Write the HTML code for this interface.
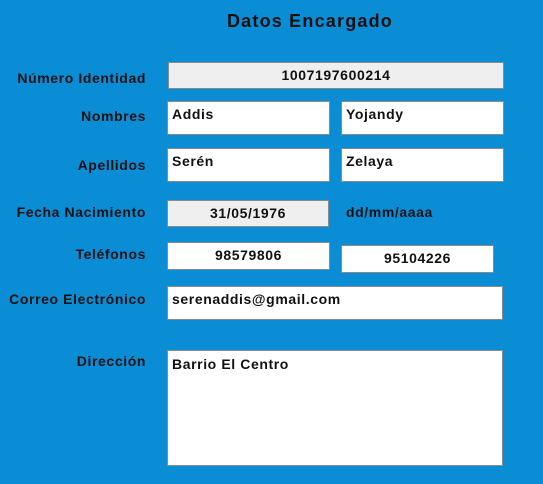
<!DOCTYPE html>
<html><head><style>
body{margin:0;width:543px;height:484px;background:#0b8dd6;position:relative;overflow:hidden;font-family:"Liberation Sans",sans-serif;font-weight:bold;color:#111}
.l{position:absolute;right:397px;font-size:14px;letter-spacing:0.6px;white-space:nowrap}
.b{position:absolute;box-sizing:border-box;border:1px solid #8a8a8a;background:#fff;font-size:14px;letter-spacing:0.6px;padding:0 4px;line-height:24px;white-space:nowrap}
.g{background:#efefef;text-align:center}
.c{text-align:center}
</style></head><body>
<div style="position:absolute;left:0;width:620px;top:11px;text-align:center;font-size:18px;letter-spacing:1.2px">Datos Encargado</div>
<div class="l" style="top:70px">Número Identidad</div>
<div class="b g" style="left:168px;top:62px;width:336px;height:27px">1007197600214</div>
<div class="l" style="top:108px">Nombres</div>
<div class="b" style="left:167px;top:101px;width:163px;height:34px">Addis</div>
<div class="b" style="left:341px;top:101px;width:163px;height:34px">Yojandy</div>
<div class="l" style="top:157px">Apellidos</div>
<div class="b" style="left:167px;top:148px;width:163px;height:34px">Serén</div>
<div class="b" style="left:341px;top:148px;width:163px;height:34px">Zelaya</div>
<div class="l" style="top:204px">Fecha Nacimiento</div>
<div class="b g" style="left:167px;top:200px;width:162px;height:27px">31/05/1976</div>
<div style="position:absolute;left:346px;top:204px;font-size:14px;letter-spacing:0.6px">dd/mm/aaaa</div>
<div class="l" style="top:246px">Teléfonos</div>
<div class="b c" style="left:167px;top:242px;width:163px;height:28px">98579806</div>
<div class="b c" style="left:341px;top:245px;width:153px;height:28px">95104226</div>
<div class="l" style="top:291px">Correo Electrónico</div>
<div class="b" style="left:167px;top:286px;width:336px;height:34px">serenaddis@gmail.com</div>
<div class="l" style="top:353px">Dirección</div>
<div class="b" style="left:167px;top:350px;width:336px;height:116px;line-height:26px">Barrio El Centro</div>
</body></html>
